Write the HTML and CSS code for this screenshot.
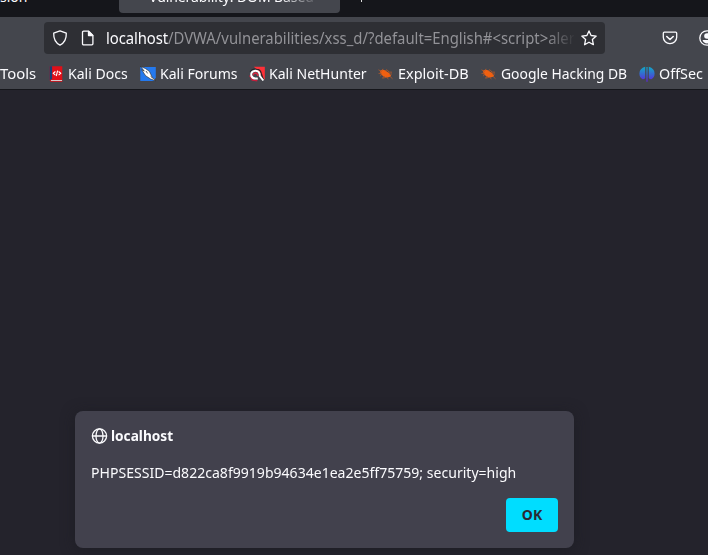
FILE: index.html
```html
<!DOCTYPE html>
<html lang="en">
<head>
<meta charset="utf-8">
<title>localhost</title>
<link rel="stylesheet" href="styles.css">
</head>
<body>
<div class="browser">
  <div class="tabs">
    <div class="tab tab-first"><span>sion</span></div>
    <div class="tab tab-active"><span>Vulnerability: DOM Based</span></div>
    <div class="new-tab"><i></i></div>
  </div>
  <div class="toolbar">
    <div class="urlbar">
      <svg class="icon" viewBox="0 0 16 16"><path d="M8 .8 14.3 3.1C14.5 8.6 12.4 13 8 15.2 3.6 13 1.5 8.6 1.7 3.1Z"/></svg>
      <svg class="icon page" viewBox="0 0 16 16"><path d="M3.6 1.2h5.1l4.2 4.2v8.3a1.1 1.1 0 0 1-1.1 1.1H3.6a1.1 1.1 0 0 1-1.1-1.1V2.3a1.1 1.1 0 0 1 1.1-1.1Z"/><path d="M8.5 1.4v4.1h4.2Z" fill="#fbfbfe"/></svg>
      <div class="url"><span><b>localhost</b>/DVWA/vulnerabilities/xss_d/?default=English#&lt;script&gt;alert</span></div>
      <svg class="icon star" viewBox="0 0 16 16"><path d="m8 .9 2.1 4.6 5.1.6-3.8 3.5 1 5.1L8 12.2l-4.4 2.5 1-5.1L.8 6.1l5.1-.6Z"/></svg>
    </div>
    <svg class="icon pocket" viewBox="0 0 16 16"><path d="M2.3 2.2h11.4q1 0 1 1v4.1a6.7 6.4 0 0 1-13.4 0V3.2q0-1 1-1Z"/><path d="m4.8 6.5 3.2 3 3.2-3" stroke-width="1.6"/></svg>
    <svg class="icon account" viewBox="0 0 16 16"><circle cx="8" cy="8" r="7.2"/><circle cx="8" cy="6" r="2.8" fill="#fbfbfe" stroke="none"/><path d="M3.5 10h9q-1.3 3.4-4.5 3.4T3.5 10Z" fill="#fbfbfe" stroke="none"/></svg>
  </div>
  <div class="bookmarks">
    <div class="mark"><span class="tools">Tools</span></div>
    <div class="mark"><svg viewBox="0 0 16 16"><path d="M1.7.3h12.6v15.4H3.2Q1.7 15.7 1.7 14Z" fill="#df1019"/><path d="M1.7.3h2.4v13l-2.4.7Z" fill="#173f75"/><path d="M3 14.1h11v.9H3Z" fill="#ddd"/><path d="M7.4 5.5 5.3 7.3l2.1 1.8M10.6 5.5l2.1 1.8-2.1 1.8M9.6 4.7 8.3 10" fill="none" stroke="#fff" stroke-width="1.1"/></svg><span>Kali Docs</span></div>
    <div class="mark"><svg viewBox="0 0 16 16"><path d="M.3 1h15.5v10.5l-2.1 3.6H.3Z" fill="#2479ee"/><path d="m.6.5 4.8 2 3.9 2.8 2.7 5.5 3.6 4-5-1.8-5-3.3-4-6 2.7 1.4Z" fill="#fff" stroke="#222" stroke-width=".6"/><path d="m6 5 1.6 2.4M10.5 10.2l2.2 2" stroke="#333" stroke-width=".8"/></svg><span>Kali Forums</span></div>
    <div class="mark"><svg viewBox="0 0 16 16"><path d="m5 .8 10.8-.1v13L11 8Z" fill="#ff3038"/><path d="M1.2 6.2Q2.5 2.5 7.4 3.1q4 .2 4.9 4.4l1.9 6" fill="none" stroke="#252629" stroke-width="1.2"/><path d="m.8 9.3 2.5 4.6 5 .8" fill="none" stroke="#c51e3b" stroke-width="1.6"/><path d="M2.5 10.5Q1.3 5.2 6.2 4.7q4.5-.2 4.6 5.3l3.5 4.5" fill="none" stroke="#fff" stroke-width="2"/><path d="M2.5 10q1.3 3.2 6.3 2.4" fill="none" stroke="#fff" stroke-width="2"/><path d="M4.3 9.4q-.2-2.5 2.3-2.5 2.2.2 2.2 3" fill="none" stroke="#d72941" stroke-width="1.5"/></svg><span>Kali NetHunter</span></div>
    <div class="mark"><svg viewBox="0 0 16 16"><use href="#bug"/></svg><span class="exploit">Exploit-DB</span></div>
    <div class="mark"><svg viewBox="0 0 16 16"><g id="bug"><path d="M2 4.8q3-2 5.6 0 3.6 1.4 5.6 5.2-3.2 2.7-7.3.5Q2.3 9 2 4.8Z" fill="#f06010"/><path d="m.5 3.8 3 1.7 1.5-2.7M.5 7.4h3l-1 2.8M7 5l2-1.3 2 2.4 3 .1M11 8h3M6 10l-1.5 2.2 4-.9 2 1.7M12 10.4l2.5 2.4" fill="none" stroke="#b4582a" stroke-width=".8"/></g></svg><span class="google">Google Hacking DB</span></div>
    <div class="mark"><svg viewBox="0 0 16 16"><defs><linearGradient id="os" gradientUnits="userSpaceOnUse" x1="0" y1="1" x2="0" y2="15"><stop stop-color="#11a9c6"/><stop offset="1" stop-color="#5b28dc"/></linearGradient></defs><path d="M6.2.7V12Q5.5 13.2 3.7 13.2 .4 11.5.4 7.4.6 2.2 6.2.7ZM7.4 1h1.2v14.7H7.4ZM9.8.7q5.6 1.5 5.8 6.7 0 4.1-3.3 5.8-1.8 0-2.5-1.2Z" fill="url(#os)"/></svg><span class="offsec">OffSec</span></div>
  </div>
  <main class="page-view">
    <section class="dialog">
      <header><svg class="icon globe" viewBox="0 0 16 16"><circle cx="8" cy="8" r="7.1"/><ellipse cx="8" cy="8" rx="3.5" ry="7.1"/><path d="M1 8h14"/></svg><strong>localhost</strong></header>
      <p><span>PHPSESSID=d822ca8f9919b94634e1ea2e5ff75759; security=high</span></p>
      <footer><button type="button">OK</button></footer>
    </section>
  </main>
</div>
</body>
</html>
```
FILE: styles.css
```css
* { box-sizing: border-box; }
body { margin: 0; background: #24232c; color: #fbfbfe; font: 15px/20px "Noto Sans", sans-serif; }
.browser { width: 708px; height: 555px; display: flex; flex-direction: column; overflow: hidden; }
.tabs { height: 17px; flex: none; background: #15161b; display: flex; }
.tab { height: 13px; overflow: hidden; white-space: nowrap; font-size: 14px; }
.tab span { display: block; margin-top: -13px; }
.tab-first { width: 119px; }
.tab-active { width: 221px; background: #44464d; border-radius: 0 0 4px 4px; padding-left: 30px; }
.tab-active span { width: 172px; overflow: hidden; letter-spacing: -.1px; mask-image: linear-gradient(90deg, #000 75%, transparent); }
.new-tab { padding-left: 21px; }
.new-tab i { display: block; width: 1px; height: 2px; background: #ddd; }
.toolbar { height: 42px; flex: none; background: #44464d; display: flex; align-items: center; padding-left: 44px; }
.urlbar { width: 561px; height: 32px; background: #2e2f34; border-radius: 4px; display: flex; align-items: center; padding-left: 8px; flex: none; }
.icon { width: 16px; height: 16px; flex: none; fill: none; stroke: #fbfbfe; stroke-width: 1.3; stroke-linejoin: round; stroke-linecap: round; }
.page { margin-left: 12px; }
.url { width: 468px; margin-left: 10px; overflow: hidden; white-space: nowrap; color: #929297; font-size: 16px; mask-image: linear-gradient(90deg, #000 440px, transparent 470px); }
.url span { display: inline-block; transform: scaleX(.929); transform-origin: left; }
.url b { color: #fbfbfe; font-weight: 400; letter-spacing: -.1px; }
.star { margin-left: 7px; }
.pocket { margin-left: 57px; }
.account { margin-left: 21px; }
.bookmarks { height: 31px; flex: none; background: #44464d; border-bottom: 1px solid #15161b; display: grid; grid-template-columns: 48px 92px 109px 129px 103px 158px 80px; align-items: center; }
.mark { display: flex; gap: 4px; align-items: center; white-space: nowrap; min-width: 0; }
.mark span { margin-top: -2px; transform: scaleX(.936); transform-origin: left; }
.mark .tools { transform: scaleX(.99); }
.mark .exploit { transform: scaleX(.965); }
.mark .google { transform: scaleX(.926); }
.mark .offsec { transform: scaleX(.955); }
.mark svg { width: 16px; height: 16px; flex: none; }
.page-view { flex: 1; display: flex; align-items: flex-end; padding: 0 0 7px 75px; background: #24232c; }
.dialog { width: 499px; height: 137px; background: #42414d; border-radius: 8px; box-shadow: 0 2px 14px #1c1b22b0; padding: 15px 16px 16px; display: flex; flex-direction: column; }
.dialog header { display: flex; gap: 4px; align-items: center; height: 20px; }
.globe { width: 17px; margin-right: -1px; }
.dialog strong { margin-top: -2px; transform: scaleX(.91); transform-origin: left; }
.dialog p { margin: 16px 0 0; white-space: nowrap; }
.dialog p span { display: inline-block; transform: scaleX(.937); transform-origin: left; }
.dialog footer { margin-top: auto; display: flex; justify-content: flex-end; }
button { width: 52px; height: 34px; padding: 0 6px 1px; border: 0; border-radius: 4px; background: #00ddff; color: #2b2a33; font: 700 14px "Noto Sans", sans-serif; }
```
